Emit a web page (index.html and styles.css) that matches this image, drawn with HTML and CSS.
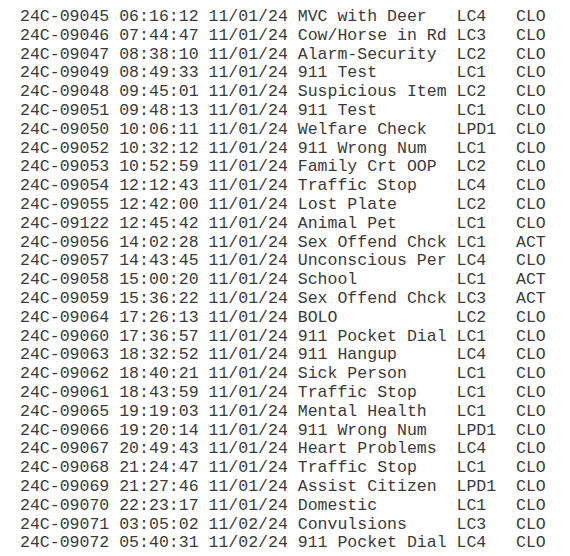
FILE: index.html
```html
<!DOCTYPE html>
<html>
<head>
    <link rel="stylesheet" href="styles.css">
</head>
<body>
<pre class="call-log">24C-09045 06:16:12 11/01/24 MVC with Deer   LC4   CLO
24C-09046 07:44:47 11/01/24 Cow/Horse in Rd LC3   CLO
24C-09047 08:38:10 11/01/24 Alarm-Security  LC2   CLO
24C-09049 08:49:33 11/01/24 911 Test        LC1   CLO
24C-09048 09:45:01 11/01/24 Suspicious Item LC2   CLO
24C-09051 09:48:13 11/01/24 911 Test        LC1   CLO
24C-09050 10:06:11 11/01/24 Welfare Check   LPD1  CLO
24C-09052 10:32:12 11/01/24 911 Wrong Num   LC1   CLO
24C-09053 10:52:59 11/01/24 Family Crt OOP  LC2   CLO
24C-09054 12:12:43 11/01/24 Traffic Stop    LC4   CLO
24C-09055 12:42:00 11/01/24 Lost Plate      LC2   CLO
24C-09122 12:45:42 11/01/24 Animal Pet      LC1   CLO
24C-09056 14:02:28 11/01/24 Sex Offend Chck LC1   ACT
24C-09057 14:43:45 11/01/24 Unconscious Per LC4   CLO
24C-09058 15:00:20 11/01/24 School          LC1   ACT
24C-09059 15:36:22 11/01/24 Sex Offend Chck LC3   ACT
24C-09064 17:26:13 11/01/24 BOLO            LC2   CLO
24C-09060 17:36:57 11/01/24 911 Pocket Dial LC1   CLO
24C-09063 18:32:52 11/01/24 911 Hangup      LC4   CLO
24C-09062 18:40:21 11/01/24 Sick Person     LC1   CLO
24C-09061 18:43:59 11/01/24 Traffic Stop    LC1   CLO
24C-09065 19:19:03 11/01/24 Mental Health   LC1   CLO
24C-09066 19:20:14 11/01/24 911 Wrong Num   LPD1  CLO
24C-09067 20:49:43 11/01/24 Heart Problems  LC4   CLO
24C-09068 21:24:47 11/01/24 Traffic Stop    LC1   CLO
24C-09069 21:27:46 11/01/24 Assist Citizen  LPD1  CLO
24C-09070 22:23:17 11/01/24 Domestic        LC1   CLO
24C-09071 03:05:02 11/02/24 Convulsions     LC3   CLO
24C-09072 05:40:31 11/02/24 911 Pocket Dial LC4   CLO</pre>
</body>
</html>
```
FILE: styles.css
```css
body {
    margin: 0;
    background-color: white;
}
.call-log {
    margin: 0;
    padding: 8px 0 0 20px;
    font-family: "Courier New", "Nimbus Mono PS", "FreeMono", "Liberation Mono", monospace;
    font-size: 16.55px;
    line-height: 18.79px;
    color: #3a3a3a;
}
```
